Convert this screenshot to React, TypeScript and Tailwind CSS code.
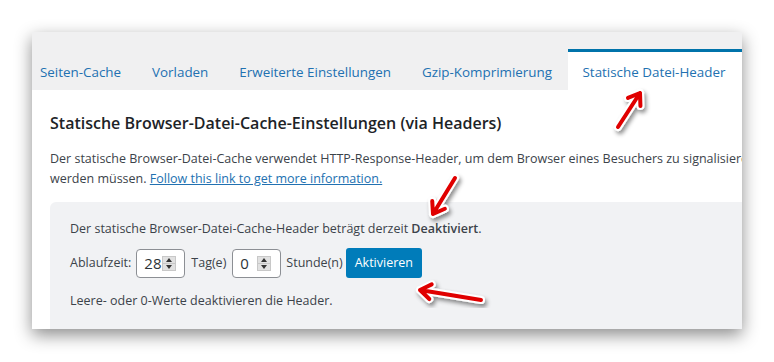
import React from "react";

const tabs = [
  "Seiten-Cache",
  "Vorladen",
  "Erweiterte Einstellungen",
  "Gzip-Komprimierung",
];

const Spinner = () => (
  <div className="flex flex-col w-[14px] h-[15px] bg-[#e1e1e1] border border-[#c8c8c8]">
    <div className="flex-1 flex items-center justify-center border-b border-[#c8c8c8]">
      <div className="w-0 h-0 border-l-[3px] border-r-[3px] border-b-[4px] border-l-transparent border-r-transparent border-b-[#333]" />
    </div>
    <div className="flex-1 flex items-center justify-center">
      <div className="w-0 h-0 border-l-[3px] border-r-[3px] border-t-[4px] border-l-transparent border-r-transparent border-t-[#333]" />
    </div>
  </div>
);

const NumberBox: React.FC<{ value: string; gap: string }> = ({ value, gap }) => (
  <div className="flex items-center w-[49px] h-[29px] bg-white border border-[#8c8f94] rounded-[4px] pl-[7px]">
    <span className={`text-[15px] text-[#2c3338] ${gap}`}>{value}</span>
    <Spinner />
  </div>
);

const Arrow: React.FC<{ tail: [number, number]; head: [number, number] }> = ({
  tail,
  head,
}) => {
  const dx = head[0] - tail[0];
  const dy = head[1] - tail[1];
  const len = Math.hypot(dx, dy);
  const ux = dx / len;
  const uy = dy / len;
  const arm = 13;
  const a1: [number, number] = [
    head[0] - arm * (ux * 0.82 - uy * 0.57),
    head[1] - arm * (uy * 0.82 + ux * 0.57),
  ];
  const a2: [number, number] = [
    head[0] - arm * (ux * 0.82 + uy * 0.57),
    head[1] - arm * (uy * 0.82 - ux * 0.57),
  ];
  const d = `M${tail[0]} ${tail[1]} L${head[0]} ${head[1]} M${a1[0]} ${a1[1]} L${head[0]} ${head[1]} L${a2[0]} ${a2[1]}`;
  return (
    <g filter="url(#shadow)">
      <path d={d} stroke="#ffffff" strokeWidth={8} fill="none" strokeLinecap="round" strokeLinejoin="round" />
      <path d={d} stroke="#e00000" strokeWidth={4} fill="none" strokeLinecap="round" strokeLinejoin="round" />
    </g>
  );
};

export default function App() {
  return (
    <div
      className="relative w-[774px] h-[362px] bg-white overflow-hidden pt-[32px] pl-[32px]"
      style={{ fontFamily: '"Open Sans", "Noto Sans", sans-serif' }}
    >
      <div className="w-[710px] h-[297px] flex flex-col overflow-hidden bg-white shadow-[0_6px_16px_rgba(0,0,0,0.45)]">
        <div className="h-[58px] shrink-0 bg-[#f0f0f1] flex items-end">
          {tabs.map((t, i) => (
            <div
              key={t}
              className={`h-[41px] flex items-center pt-[2px] border-t-[3px] border-transparent text-[13.4px] text-[#2271b1] whitespace-nowrap pr-[15.5px] ${
                i === 0 ? "pl-[8px]" : "pl-[15.5px]"
              }`}
            >
              {t}
            </div>
          ))}
          <div className="flex-1 h-[41px] flex items-center pt-[2px] bg-white border-t-[3px] border-[#0073aa] pl-[15px] text-[13.4px] text-[#2271b1] whitespace-nowrap">
            Statische Datei-Header
          </div>
        </div>
        <div className="w-[1100px] pl-[18px] pt-[22px]">
          <h2 className="text-[16px] font-semibold text-[#1d2327] leading-[22px]">
            Statische Browser-Datei-Cache-Einstellungen (via Headers)
          </h2>
          <p className="mt-[15px] text-[12.5px] leading-[20px] text-[#3c434a] whitespace-nowrap">
            Der statische Browser-Datei-Cache verwendet HTTP-Response-Header, um dem Browser eines Besuchers zu signalisieren, wie lange Dateien zwischengespeichert und wann sie erneut abgerufen
            <br />
            werden müssen.{" "}
            <a href="#" className="text-[#2271b1] underline">
              Follow this link to get more information.
            </a>
          </p>
          <div className="mt-[13px] bg-[#f1f2f4] rounded-tl-[6px] pl-[20px] pt-[17px] pb-[20px] text-[12.5px] text-[#3c434a]">
            <p className="leading-[20px]">
              Der statische Browser-Datei-Cache-Header beträgt derzeit{" "}
              <span className="font-semibold">Deaktiviert</span>.
            </p>
            <div className="mt-[9px] flex items-center h-[30px]">
              <span className="mr-[5px]">Ablaufzeit:</span>
              <NumberBox value="28" gap="mr-[1px]" />
              <span className="ml-[6px] mr-[6px]">Tag(e)</span>
              <NumberBox value="0" gap="mr-[8px]" />
              <span className="ml-[5px] mr-[3px]">Stunde(n)</span>
              <button className="h-[30px] px-[9px] rounded-[3px] bg-[#007cba] text-white text-[12.5px]">
                Aktivieren
              </button>
            </div>
            <p className="mt-[13px] leading-[20px]">
              Leere- oder 0-Werte deaktivieren die Header.
            </p>
          </div>
        </div>
      </div>
      <svg className="absolute inset-0 pointer-events-none" width={774} height={362}>
        <defs>
          <filter id="shadow" x="-50%" y="-50%" width="200%" height="200%">
            <feDropShadow dx="2" dy="3" stdDeviation="2" floodColor="#000" floodOpacity="0.45" />
          </filter>
        </defs>
        <Arrow tail={[618, 127]} head={[640, 93]} />
        <Arrow tail={[455, 178]} head={[433, 214]} />
        <Arrow tail={[481, 300]} head={[420, 290]} />
      </svg>
    </div>
  );
}
